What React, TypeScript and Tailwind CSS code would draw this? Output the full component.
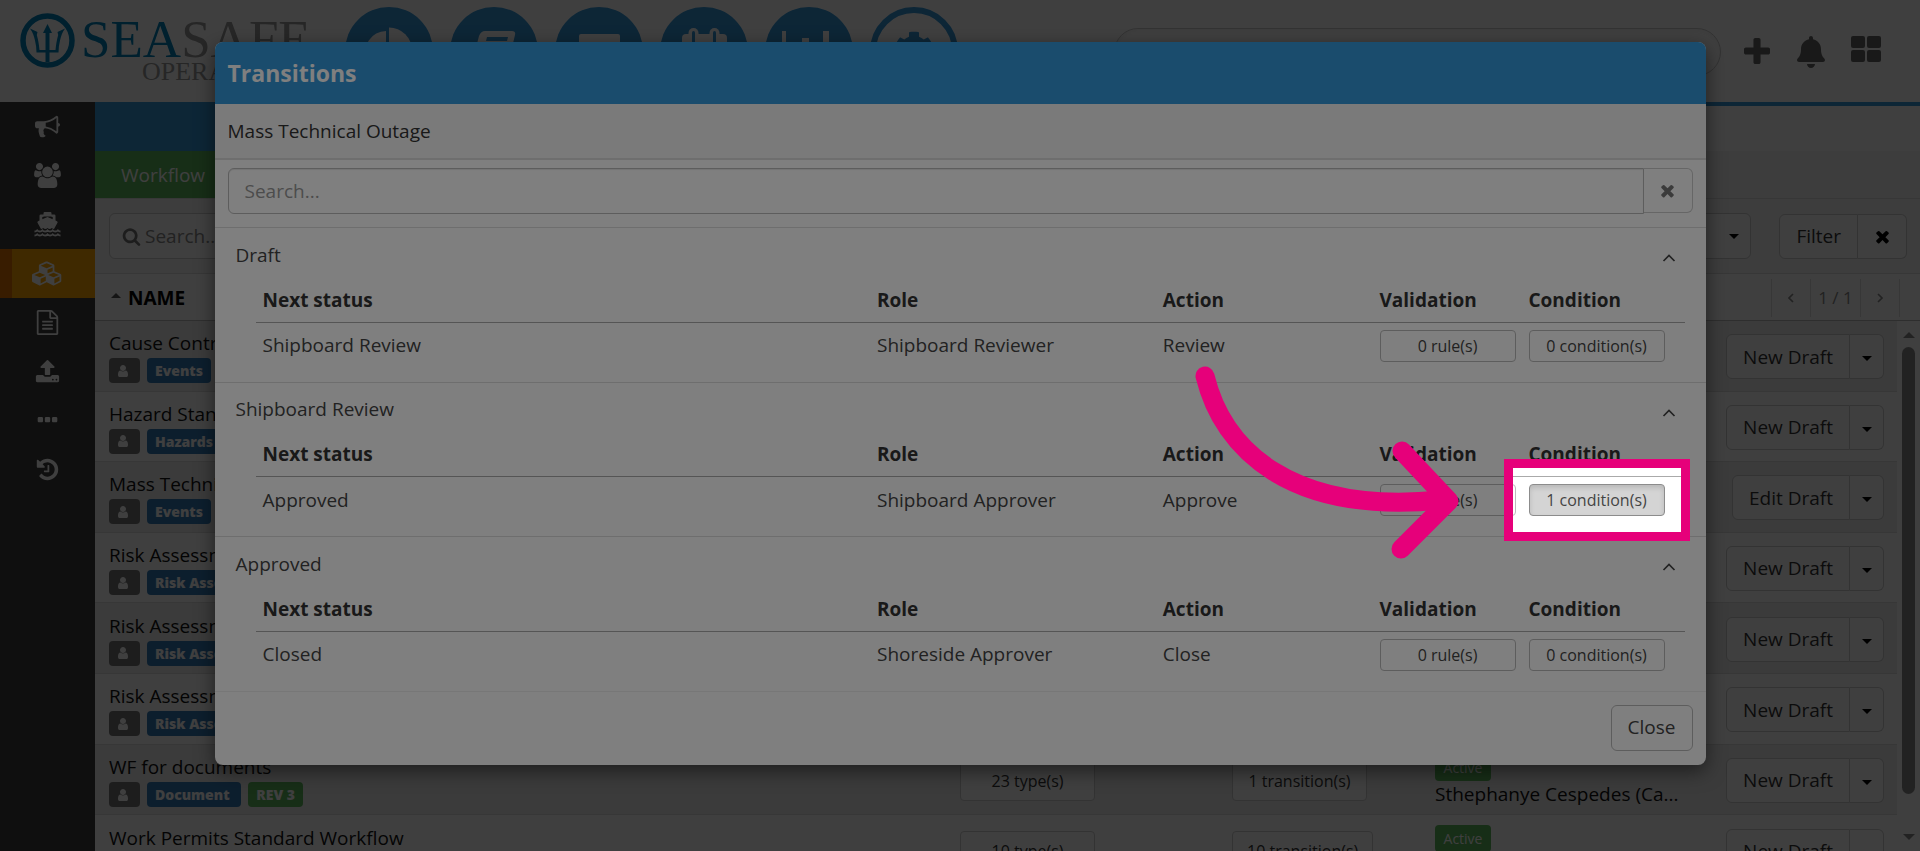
import React from "react";
import { FaBell, FaCog } from "react-icons/fa";

const ICONS = {
    bullhorn: {
        box: "0 0 1792 1792",
        d: "M1664 640q53 0 90.5 37.5t37.5 90.5-37.5 90.5-90.5 37.5v384q0 52-38 90t-90 38q-417-347-812-380-58 19-91 66t-31 100.5 40 92.5q-20 33-23 65.5t6 58 33.5 55 48 50 61.5 50.5q-29 58-111.5 83t-168.5 11.5-132-55.5q-7-23-29.5-87.5t-32-94.5-23-89-15-101 3.5-98.5 22-110.5h-122q-66 0-113-47t-47-113v-192q0-66 47-113t113-47h480q435 0 896-384 52 0 90 38t38 90v384zm-128 604v-954q-394 302-768 343v270q377 42 768 341z",
    },
    users: {
        box: "-64 0 1920 1792",
        d: "M529 896q-162 5-265 128h-134q-82 0-138-40.5t-56-118.5q0-353 124-353 6 0 43.5 21t97.5 42.5 119 21.5q67 0 133-23-5 37-5 66 0 139 81 256zm1071 637q0 120-73 189.5t-194 69.5h-874q-121 0-194-69.5t-73-189.5q0-53 3.5-103.5t14-109 26.5-108.5 43-97.5 62-81 85.5-53.5 111.5-20q10 0 43 21.5t73 48 107 48 135 21.5 135-21.5 107-48 73-48 43-21.5q61 0 111.5 20t85.5 53.5 62 81 43 97.5 26.5 108.5 14 109 3.5 103.5zm-1024-1277q0 106-75 181t-181 75-181-75-75-181 75-181 181-75 181 75 75 181zm704 384q0 159-112.5 271.5t-271.5 112.5-271.5-112.5-112.5-271.5 112.5-271.5 271.5-112.5 271.5 112.5 112.5 271.5zm576 225q0 78-56 118.5t-138 40.5h-134q-103-123-265-128 81-117 81-256 0-29-5-66 66 23 133 23 59 0 119-21.5t97.5-42.5 43.5-21q124 0 124 353zm-128-609q0 106-75 181t-181 75-181-75-75-181 75-181 181-75 181 75 75 181z",
    },
    cubes: {
        box: "0 0 2304 1792",
        d: "M640 1632l384-192v-314l-384 164v342zm-64-454l404-173-404-173-404 173zm1088 454l384-192v-314l-384 164v342zm-64-454l404-173-404-173-404 173zm-448-293l384-165v-266l-384 164v267zm-64-379l441-189-441-189-441 189zm1088 518v416q0 36-19 67t-52 47l-448 224q-25 14-57 14t-57-14l-448-224q-4-2-7-4-2 2-7 4l-448 224q-25 14-57 14t-57-14l-448-224q-33-16-52-47t-19-67v-416q0-38 21.5-70t56.5-48l434-186v-400q0-38 21.5-70t56.5-48l448-192q23-10 50-10t50 10l448 192q35 16 56.5 48t21.5 70v400l434 186q36 16 57 48t21 70z",
    },
    file: {
        box: "0 0 1792 1792",
        d: "M1596 380q28 28 48 76t20 88v1152q0 40-28 68t-68 28h-1344q-40 0-68-28t-28-68v-1600q0-40 28-68t68-28h896q40 0 88 20t76 48zm-444-244v376h376q-10-29-22-41l-313-313q-12-12-41-22zm384 1528v-1024h-416q-40 0-68-28t-28-68v-416h-768v1536h1280zm-1024-864q0-14 9-23t23-9h704q14 0 23 9t9 23v64q0 14-9 23t-23 9h-704q-14 0-23-9t-9-23v-64zm736 224q14 0 23 9t9 23v64q0 14-9 23t-23 9h-704q-14 0-23-9t-9-23v-64q0-14 9-23t23-9h704zm0 256q14 0 23 9t9 23v64q0 14-9 23t-23 9h-704q-14 0-23-9t-9-23v-64q0-14 9-23t23-9h704z",
    },
    upload: {
        box: "0 0 1792 1792",
        d: "M1344 1472q0-26-19-45t-45-19-45 19-19 45 19 45 45 19 45-19 19-45zm256 0q0-26-19-45t-45-19-45 19-19 45 19 45 45 19 45-19 19-45zm128-224v320q0 40-28 68t-68 28h-1472q-40 0-68-28t-28-68v-320q0-40 28-68t68-28h427q21 56 70.5 92t110.5 36h256q61 0 110.5-36t70.5-92h427q40 0 68 28t28 68zm-325-648q-17 40-59 40h-256v448q0 26-19 45t-45 19h-256q-26 0-45-19t-19-45v-448h-256q-42 0-59-40-17-39 14-69l448-448q18-19 45-19t45 19l448 448q31 30 14 69z",
    },
    ellipsis: {
        box: "0 0 1792 1792",
        d: "M576 736v192q0 40-28 68t-68 28h-192q-40 0-68-28t-28-68v-192q0-40 28-68t68-28h192q40 0 68 28t28 68zm512 0v192q0 40-28 68t-68 28h-192q-40 0-68-28t-28-68v-192q0-40 28-68t68-28h192q40 0 68 28t28 68zm512 0v192q0 40-28 68t-68 28h-192q-40 0-68-28t-28-68v-192q0-40 28-68t68-28h192q40 0 68 28t28 68z",
    },
    history: {
        box: "0 0 1792 1792",
        d: "M1664 896q0 156-61 298t-164 245-245 164-298 61q-172 0-327-72.5t-264-204.5q-7-10-6.5-22.5t8.5-20.5l137-138q10-9 25-9 16 2 23 12 73 95 179 147t225 52q104 0 198.5-40.5t163.5-109.5 109.5-163.5 40.5-198.5-40.5-198.5-109.5-163.5-163.5-109.5-198.5-40.5q-98 0-188 35.5t-160 101.5l137 138q31 30 14 69-17 40-59 40h-448q-26 0-45-19t-19-45v-448q0-42 40-59 39-17 69 14l130 129q107-101 244.5-156.5t284.5-55.5q156 0 298 61t245 164 164 245 61 298zm-640-288v448q0 14-9 23t-23 9h-320q-14 0-23-9t-9-23v-64q0-14 9-23t23-9h224v-352q0-14 9-23t23-9h64q14 0 23 9t9 23z",
    },
    plus: {
        box: "192 128 1408 1408",
        d: "M1600 736v192q0 40-28 68t-68 28h-416v416q0 40-28 68t-68 28h-192q-40 0-68-28t-28-68v-416h-416q-40 0-68-28t-28-68v-192q0-40 28-68t68-28h416v-416q0-40 28-68t68-28h192q40 0 68 28t28 68v416h416q40 0 68 28t28 68z",
    },
    times: {
        box: "0 0 1792 1792",
        d: "M1490 1322q0 40-28 68l-136 136q-28 28-68 28t-68-28l-294-294-294 294q-28 28-68 28t-68-28l-136-136q-28-28-28-68t28-68l294-294-294-294q-28-28-28-68t28-68l136-136q28-28 68-28t68 28l294 294 294-294q28-28 68-28t68 28l136 136q28 28 28 68t-28 68l-294 294 294 294q28 28 28 68z",
    },
    user: {
        box: "0 0 1792 1792",
        d: "M1536 1399q0 109-62.5 187t-150.5 78h-854q-88 0-150.5-78t-62.5-187q0-85 8.5-160.5t31.5-152 58.5-131 94-89 134.5-34.5q131 128 313 128t313-128q76 0 134.5 34.5t94 89 58.5 131 31.5 152 8.5 160.5zm-256-887q0 159-112.5 271.5t-271.5 112.5-271.5-112.5-112.5-271.5 112.5-271.5 271.5-112.5 271.5 112.5 112.5 271.5z",
    },
    search: {
        box: "0 0 1792 1792",
        d: "M1216 832q0-185-131.5-316.5t-316.5-131.5-316.5 131.5-131.5 316.5 131.5 316.5 316.5 131.5 316.5-131.5 131.5-316.5zm512 832q0 52-38 90t-90 38q-54 0-90-38l-343-342q-179 124-399 124-143 0-273.5-55.5t-225-150-150-225-55.5-273.5 55.5-273.5 150-225 225-150 273.5-55.5 273.5 55.5 225 150 150 225 55.5 273.5q0 220-124 399l343 343q37 37 37 90z",
    },
};

type IconName = keyof typeof ICONS;

function Icon({ name, className }: { name: IconName; className: string }) {
    return (
        <svg viewBox={ICONS[name].box} className={className} fill="currentColor" aria-hidden="true">
            <path d={ICONS[name].d} />
        </svg>
    );
}

function ShipIcon() {
    return (
        <svg viewBox="0 0 27 26" className="h-[26px] w-[27px]" fill="currentColor" aria-hidden="true">
            <path d="M9.500 2.500V1.200Q9.500 0 10.700 0h5.600q1.200 0 1.200 1.200v1.300h2.700q1.300 0 1.300 1.300v4.700l1.500.7q1 .5.500 1.600L20 17q-1.200 0-2.200-1-1 1-2.150 1t-2.150-1q-1 1-2.150 1t-2.150-1q-1 1-2.200 1L3.500 10.800q-.5-1.100.5-1.600l1.500-.7V3.800q0-1.300 1.300-1.300zM8.300 5v2.200l5.200-2.200 5.200 2.200V5l-2-.6h-6.400z" />
            <path
                d="M.5 19.500q1.600 0 2.700-1.200 1.100 1.200 2.600 1.200t2.600-1.200q1.100 1.200 2.600 1.200t2.500-1.200q1.100 1.200 2.600 1.200t2.600-1.200q1.100 1.200 2.600 1.200t2.600-1.200q1.100 1.200 2.600 1.200M.5 23.500q1.600 0 2.700-1.200 1.100 1.200 2.600 1.200t2.600-1.200q1.100 1.200 2.600 1.200t2.500-1.200q1.100 1.200 2.600 1.200t2.600-1.200q1.100 1.200 2.600 1.200t2.600-1.200q1.100 1.200 2.600 1.200"
                fill="none"
                stroke="currentColor"
                strokeWidth="1.800"
            />
        </svg>
    );
}

function Caret({ className }: { className: string }) {
    return (
        <svg viewBox="0 0 10 5" className={className} fill="currentColor" aria-hidden="true">
            <path d="M0 0h10L5 5z" />
        </svg>
    );
}

function Chevron({ d, className }: { d: string; className: string }) {
    return (
        <svg viewBox="0 0 14 14" className={className} fill="none" stroke="currentColor" strokeWidth="1.700" aria-hidden="true">
            <path d={d} />
        </svg>
    );
}

function Logo() {
    return (
        <svg viewBox="0 0 300 80" className="h-20 w-[300px]" aria-label="Seasafe Operations">
            <circle cx="27.500" cy="32.500" r="24.500" fill="none" stroke="#0082ba" strokeWidth="5.500" />
            <path d="M25.500 24v30h4V24z" fill="#0082ba" />
            <path
                d="M10 20.500l7.500 3.500-.7 3c1.500 5 2.200 10 2.700 15h16c.5-5 1.200-10 2.700-15l-.7-3 7.500-3.500c-3 4-4 8-5 12-1 4-1.500 8-1.500 12h-22c0-4-.5-8-1.500-12-1-4-2-8-5-12z"
                fill="#0082ba"
            />
            <path d="M27.500 16l4.500 9h-9z" fill="#0082ba" />
            <text x="61" y="49" fontFamily="Liberation Serif, serif" fontSize="53" fill="#0082ba">
                SEA<tspan fill="#9a9a9a">SAFE</tspan>
            </text>
            <text x="122" y="72" fontFamily="Liberation Serif, serif" fontSize="26" fill="#9a9a9a">
                OPERATIONS
            </text>
        </svg>
    );
}

const MODULES = [
    {
        label: "Dashboard",
        drawing: (
            <>
                <path d="M41 24v21l15 15A21 21 0 1 1 41 24z" fill="#fff" />
                <path d="M44 20.500A23 23 0 0 1 67 43.500H44z" fill="#fff" />
            </>
        ),
    },
    {
        label: "Library",
        drawing: (
            <>
                <path d="M35 24h27q4 0 3 4l-7 29q-1 4-5 4H26q-5 0-4-5l7-27q2-5 6-5z" fill="#fff" />
                <path d="M37 30h21l-1 4H36zM35 37h21l-1 4H34z" fill="#3498db" />
            </>
        ),
    },
    {
        label: "Archive",
        drawing: (
            <>
                <rect x="24" y="27" width="41" height="11" rx="2" fill="#fff" />
                <path d="M27 41h35v20H27z" fill="#fff" />
            </>
        ),
    },
    {
        label: "Calendar",
        drawing: (
            <>
                <rect x="22" y="27" width="45" height="36" rx="4" fill="#fff" />
                <rect x="28.500" y="21" width="10" height="18" rx="5" fill="#fff" />
                <rect x="49.500" y="21" width="10" height="18" rx="5" fill="#fff" />
                <rect x="32" y="24" width="3" height="12" rx="1.500" fill="#3498db" />
                <rect x="53" y="24" width="3" height="12" rx="1.500" fill="#3498db" />
            </>
        ),
    },
    {
        label: "Reports",
        drawing: <path d="M17 24h4v34h48v4H17zM26 42h6v13h-6zM37 31h7v24h-7zM48 37h6v18h-6zM58 24h6v31h-6z" fill="#fff" />,
    },
];

const SIDE_ITEMS: { label: string; icon: React.ReactNode; active?: boolean }[] = [
    { label: "Announcements", icon: <Icon name="bullhorn" className="size-[25px]" /> },
    { label: "People", icon: <Icon name="users" className="h-[25px] w-[27px]" /> },
    { label: "Vessels", icon: <ShipIcon /> },
    { label: "Configuration", icon: <Icon name="cubes" className="h-[25px] w-[31px]" />, active: true },
    { label: "Documents", icon: <Icon name="file" className="size-[25px]" /> },
    { label: "Upload", icon: <Icon name="upload" className="size-[25px]" /> },
    { label: "More", icon: <Icon name="ellipsis" className="size-[25px]" /> },
    { label: "History", icon: <Icon name="history" className="size-[25px]" /> },
];

const WORKFLOWS = [
    { name: "Cause Control", tag: "Events", action: "New Draft" },
    { name: "Hazard Standard", tag: "Hazards", action: "New Draft" },
    { name: "Mass Technical", tag: "Events", action: "Edit Draft" },
    { name: "Risk Assessment", tag: "Risk Asses", action: "New Draft" },
    { name: "Risk Assessment", tag: "Risk Asses", action: "New Draft" },
    { name: "Risk Assessment", tag: "Risk Asses", action: "New Draft" },
    {
        name: "WF for documents",
        tag: "Document\u00a0",
        rev: "REV 3",
        types: "23 type(s)",
        transitions: "1 transition(s)",
        status: "Active",
        author: "Sthephanye Cespedes (Ca...",
        action: "New Draft",
    },
    {
        name: "Work Permits Standard Workflow",
        tag: "Permits",
        types: "10 type(s)",
        transitions: "10 transition(s)",
        status: "Active",
        author: "Sthephanye Cespedes (Ca...",
        action: "New Draft",
    },
];

const TRANSITIONS = [
    { status: "Draft", next: "Shipboard Review", role: "Shipboard Reviewer", action: "Review", rules: 0, conditions: 0 },
    { status: "Shipboard Review", next: "Approved", role: "Shipboard Approver", action: "Approve", rules: 0, conditions: 1 },
    { status: "Approved", next: "Closed", role: "Shoreside Approver", action: "Close", rules: 0, conditions: 0 },
];

function Header() {
    return (
        <header className="flex h-[102px] shrink-0 items-start bg-white">
            <div className="w-[345px] shrink-0 pt-2 pl-5">
                <Logo />
            </div>
            <nav className="flex shrink-0 gap-[17px] pt-[7px]">
                {MODULES.map((m) => (
                    <a key={m.label} href="#" aria-label={m.label} className="size-[88px] rounded-full bg-[#3498db]">
                        <svg viewBox="0 0 88 88" className="size-[88px]" aria-hidden="true">
                            {m.drawing}
                        </svg>
                    </a>
                ))}
                <a
                    href="#"
                    aria-label="Settings"
                    className="flex size-[88px] items-center justify-center rounded-full border-[6px] border-[#3498db] text-[#3498db]"
                >
                    <FaCog className="size-10" />
                </a>
            </nav>
            <div className="ml-auto flex items-center pt-7 pr-[39px] text-[#666]">
                <input
                    type="search"
                    aria-label="Search everything"
                    className="h-12 w-[607px] rounded-full border border-[#ccc] bg-white px-6 shadow-inner"
                />
                <button type="button" aria-label="Add" className="mb-0.5 ml-[23px]">
                    <Icon name="plus" className="size-[26px]" />
                </button>
                <button type="button" aria-label="Notifications" className="ml-[26px]">
                    <FaBell className="h-8 w-[30px]" />
                </button>
                <button type="button" aria-label="Apps" className="mb-1.5 ml-[25px] grid grid-cols-2 gap-0.5">
                    <span className="h-3 w-3.5 rounded-xs bg-current" />
                    <span className="h-3 w-3.5 rounded-xs bg-current" />
                    <span className="h-3 w-3.5 rounded-xs bg-current" />
                    <span className="h-3 w-3.5 rounded-xs bg-current" />
                </button>
            </div>
        </header>
    );
}

function Sidebar() {
    return (
        <nav className="w-[95px] shrink-0 bg-[#3c3c3c] text-white">
            {SIDE_ITEMS.map((item) => (
                <a
                    key={item.label}
                    href="#"
                    aria-label={item.label}
                    className={
                        item.active
                            ? "flex h-[49px] items-center justify-center border-l-12 border-[#e07000] bg-[#ffa500] pr-3"
                            : "flex h-[49px] items-center justify-center"
                    }
                >
                    {item.icon}
                </a>
            ))}
        </nav>
    );
}

function WorkflowRows() {
    return (
        <table className="h-[565px] flex-1 table-fixed border-collapse text-left text-[#111]">
            <tbody>
                {WORKFLOWS.map((w, i) => (
                    <tr key={i} className="border-b border-[#ddd] odd:bg-[#ececec]">
                        <td className="overflow-hidden pt-0.5 pb-0 pl-3.5 whitespace-nowrap">
                            <div className="leading-[26px]">{w.name}</div>
                            <div className="mt-0.5 flex gap-[7px] text-[14px] leading-[25px] font-extrabold text-white">
                                <span className="flex w-[31px] items-center rounded bg-[#777] pl-[7px]">
                                    <Icon name="user" className="size-[14px]" />
                                </span>
                                <span className="rounded bg-[#337ab7] px-2">{w.tag}</span>
                                {w.rev && <span className="rounded bg-[#5cb85c] px-2">{w.rev}</span>}
                            </div>
                        </td>
                        <td className="w-[272px] p-0 pt-0.5">
                            {w.types && (
                                <button type="button" className="h-10 w-[135px] rounded border border-[#ccc] bg-white text-base text-[#333]">
                                    {w.types}
                                </button>
                            )}
                        </td>
                        <td className="w-[203px] p-0 pt-0.5">
                            {w.transitions && (
                                <button type="button" className="h-10 min-w-[135px] rounded border border-[#ccc] bg-white px-3.5 text-base text-[#333]">
                                    {w.transitions}
                                </button>
                            )}
                        </td>
                        <td className="w-[270px] p-0 pt-0.5 whitespace-nowrap">
                            {w.status && (
                                <>
                                    <span className="block w-14 rounded bg-[#5cb85c] text-center text-[14px] leading-[27px] text-white">
                                        {w.status}
                                    </span>
                                    <div className="leading-[26px]">{w.author}</div>
                                </>
                            )}
                        </td>
                        <td className="w-[192px] pt-0.5 pr-[13px] pb-0">
                            <div className="flex justify-end text-[#333]">
                                <button type="button" className="h-[45px] rounded-l-md border border-[#ccc] bg-white px-4">
                                    {w.action}
                                </button>
                                <button
                                    type="button"
                                    aria-label={w.action + " options"}
                                    className="flex w-[34px] items-center justify-center rounded-r-md border border-l-0 border-[#ccc] bg-white pt-1 text-black"
                                >
                                    <Caret className="h-[5px] w-[10px]" />
                                </button>
                            </div>
                        </td>
                    </tr>
                ))}
            </tbody>
        </table>
    );
}

function WorkflowPage() {
    return (
        <main className="flex min-w-0 flex-1 flex-col border-t-4 border-[#3498db] bg-white">
            <div className="flex h-[45px] shrink-0">
                <div className="w-[300px] bg-[#3498db]" />
            </div>
            <div className="flex h-12 shrink-0 border-b border-[#ddd] bg-[#f5f5f5]">
                <a href="#" className="flex items-center bg-[#5cb85c] px-[26px] pt-0.5 text-white">
                    Workflow
                </a>
            </div>
            <div className="flex h-[75px] shrink-0 items-center border-b border-[#ddd] bg-[#f5f5f5] pr-[13px] pl-3.5">
                <label className="flex h-[46px] w-[400px] items-center rounded-md border border-[#ccc] bg-white px-3 text-[#777]">
                    <Icon name="search" className="size-[19px]" />
                    <input type="text" placeholder="Search..." aria-label="Search workflows" className="ml-1 flex-1 outline-none placeholder:text-[#888]" />
                </label>
                <div className="relative ml-auto flex items-center">
                    <select aria-label="Status" className="h-[46px] w-[300px] appearance-none rounded-md border border-[#ccc] bg-white" />
                    <Caret className="pointer-events-none absolute right-3 h-[5px] w-[10px]" />
                </div>
                <button type="button" className="ml-7 h-[45px] rounded-l-md border border-[#ccc] bg-white px-4 text-[#333]">
                    Filter
                </button>
                <button
                    type="button"
                    aria-label="Clear filter"
                    className="flex h-[45px] w-[49px] items-center justify-center rounded-r-md border border-l-0 border-[#ccc] bg-white"
                >
                    <Icon name="times" className="size-[19px]" />
                </button>
            </div>
            <div className="flex h-[47px] shrink-0 items-center border-b border-[#bbb] pt-0.5 pr-5 pl-4 text-black">
                <Caret className="mb-1.5 h-[5px] w-[10px] rotate-180 text-[#555]" />
                <span className="ml-[7px] font-bold">NAME</span>
                <div className="ml-auto flex h-[38px] items-center border-x border-[#ddd] text-[#888]">
                    <button type="button" aria-label="Previous page" className="flex w-[38px] justify-center">
                        <Chevron d="M9 3L5 7l4 4" className="size-3.5" />
                    </button>
                    <span className="flex h-full w-[51px] items-center justify-center border-x border-[#ddd] text-[17px]">1 / 1</span>
                    <button type="button" aria-label="Next page" className="flex w-[38px] justify-center">
                        <Chevron d="M5 3l4 4-4 4" className="size-3.5" />
                    </button>
                </div>
            </div>
            <div className="flex min-h-0 flex-1 overflow-hidden">
                <WorkflowRows />
                <div className="flex h-full w-[23px] shrink-0 flex-col items-center bg-[#fcfcfc] py-2.5 text-[#8b8b8b]">
                    <Caret className="h-2 w-3 rotate-180" />
                    <div className="mt-2 h-[447px] w-[13px] rounded-full bg-current" />
                    <Caret className="mt-auto h-2 w-3" />
                </div>
            </div>
        </main>
    );
}

function Spotlight() {
    return (
        <div className="pointer-events-none absolute -inset-x-[25px] -inset-y-[25px] z-20 border-[9px] border-[#e6007a] shadow-[0_0_0_3000px_rgba(0,0,0,0.5)]">
            <svg
                viewBox="1190 362 280 202"
                className="absolute -top-[106px] right-[210px] h-[202px] w-[280px]"
                fill="none"
                stroke="#e6007a"
                strokeWidth="19"
                strokeLinecap="round"
                strokeLinejoin="round"
                aria-hidden="true"
            >
                <path d="M1204 376C1222 450 1290 515 1440 500" />
                <path d="M1401 451L1448 501L1400 549" />
                <path d="M1436 492v17l10-8z" />
            </svg>
        </div>
    );
}

function TransitionSection(props: any) {
    const { status, next, role, action, rules, conditions } = props;
    return (
        <section className="border-t border-[#ddd] pr-[21px] pb-5 pl-[21px] text-[#444]">
            <div className="flex h-[50px] items-center justify-between pt-1 pr-[9px]">
                <h3>{status}</h3>
                <button type="button" aria-label={"Collapse " + status} className="pt-1.5">
                    <Chevron d="M1.500 10L7 4.500l5.500 5.500" className="size-3.5" />
                </button>
            </div>
            <div className="pl-5">
                <table className="w-full table-fixed border-collapse text-left">
                    <thead>
                        <tr className="h-11 border-b border-[#aaa] text-[#333]">
                            <th className="w-[43%] px-[7px]">Next status</th>
                            <th className="w-[20%] px-[7px]">Role</th>
                            <th className="px-[7px]">Action</th>
                            <th className="w-[149px] px-[7px]">Validation</th>
                            <th className="w-[163px] px-[7px]">Condition</th>
                        </tr>
                    </thead>
                    <tbody>
                        <tr>
                            <td className="px-[7px] pt-[7px]">{next}</td>
                            <td className="px-[7px] pt-[7px]">{role}</td>
                            <td className="px-[7px] pt-[7px]">{action}</td>
                            <td className="px-[7px] pt-[7px]">
                                <button type="button" className="block h-8 w-[136px] rounded border border-[#bbb] bg-white text-base">
                                    {rules} rule(s)
                                </button>
                            </td>
                            <td className="px-[7px] pt-[7px]">
                                {conditions > 0 ? (
                                    <div className="relative w-[136px]">
                                        <button
                                            type="button"
                                            className="block h-8 w-full rounded border border-[#8c8c8c] bg-[#d4d4d4] text-base shadow-[inset_0_3px_5px_rgba(0,0,0,0.125)]"
                                        >
                                            {conditions} condition(s)
                                        </button>
                                        <Spotlight />
                                    </div>
                                ) : (
                                    <button type="button" className="block h-8 w-[136px] rounded border border-[#bbb] bg-white text-base">
                                        {conditions} condition(s)
                                    </button>
                                )}
                            </td>
                        </tr>
                    </tbody>
                </table>
            </div>
        </section>
    );
}

function TransitionsDialog() {
    return (
        <div
            role="dialog"
            aria-labelledby="dialogTitle"
            className="relative mx-auto w-full max-w-[1491px] rounded-lg bg-white shadow-[0_6px_19px_rgba(0,0,0,0.5)]"
        >
            <h2 id="dialogTitle" className="rounded-t-lg bg-[#3498db] px-[13px] py-[15px] text-[23px] leading-8 font-bold text-white">
                Transitions
            </h2>
            <p className="flex h-14 items-center border-b-2 border-[#ddd] bg-[#f5f5f5] px-[13px] pt-px text-[#333]">Mass Technical Outage</p>
            <div className="flex px-[13px] pt-2 pb-[13px]">
                <input
                    type="text"
                    aria-label="Search transitions"
                    placeholder="Search..."
                    className="h-[46px] min-w-0 flex-1 rounded-l-md border border-[#bbb] px-4 shadow-[inset_0_1px_1px_rgba(0,0,0,0.1)] placeholder:text-[#999]"
                />
                <button
                    type="button"
                    aria-label="Clear search"
                    className="flex h-[45px] w-[49px] items-center justify-center rounded-r-md border border-l-0 border-[#ccc] text-[#777]"
                >
                    <Icon name="times" className="size-[19px]" />
                </button>
            </div>
            {TRANSITIONS.map((t) => (
                <TransitionSection key={t.status} {...t} />
            ))}
            <div className="flex justify-end border-t border-[#eee] px-[13px] pt-[13px] pb-3.5">
                <button type="button" className="h-[46px] rounded-md border border-[#bbb] bg-white px-4 text-[#444]">
                    Close
                </button>
            </div>
        </div>
    );
}

export default function App() {
    return (
        <div className="relative flex h-screen flex-col overflow-hidden bg-white font-['Open_Sans',sans-serif] text-[19px]">
            <Header />
            <div className="flex min-h-0 flex-1">
                <Sidebar />
                <WorkflowPage />
            </div>
            <div className="absolute inset-0 bg-black/50 pt-[42px]">
                <TransitionsDialog />
            </div>
        </div>
    );
}
